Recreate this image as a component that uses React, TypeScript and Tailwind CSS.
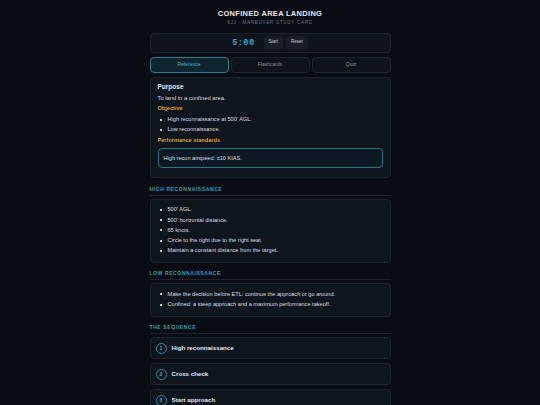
import { useState } from 'react';

const font = { fontFamily: '"Liberation Sans", Arial, sans-serif' };

function Bullets({ items }: { items: string[] }) {
  return (
    <ul className="flex flex-col gap-[3.3px]">
      {items.map((t) => (
        <li key={t} className="flex items-center gap-[4px] text-[5.6px] leading-[7px] text-[#d8dee5]">
          <span className="ml-[2px] h-[2px] w-[2px] shrink-0 bg-[#b9c2cc]" />
          <span className="ml-[2px]">{t}</span>
        </li>
      ))}
    </ul>
  );
}

function SectionTitle({ children }: { children: string }) {
  return (
    <div className="mt-[7.5px] mb-[3px] border-b border-[#1b2430] pb-[3px] text-[5px] leading-[6px] font-bold tracking-[0.12em] text-[#3a9fb5]">
      {children}
    </div>
  );
}

export default function App() {
  const [tab, setTab] = useState('Reference');
  const tabs = ['Reference', 'Flashcards', 'Quiz'];
  const steps = ['High reconnaissance', 'Cross check', 'Start approach'];

  return (
    <div className="min-h-[405px] w-full bg-[#090c13] leading-none" style={font}>
      <div className="mx-auto w-[241px] pt-[8.5px]">
        <h1 className="text-center text-[7.5px] leading-[9px] font-bold tracking-[0.04em] text-[#e6e9ee]">CONFINED AREA LANDING</h1>
        <p className="mt-[2.5px] text-center text-[4.6px] leading-[5px] tracking-[0.15em] text-[#6b7480]">6JJ · MANEUVER STUDY CARD</p>

        <div className="mt-[7.5px] flex h-[20px] items-center justify-center gap-[3px] rounded-[4px] border border-[#1a232e] bg-[#0f141c]">
          <span className="mr-[6px] font-mono text-[8.5px] leading-[10px] font-bold tracking-[0.06em] text-[#39a8c9]">5:00</span>
          <button className="h-[13px] rounded-[3px] bg-[#171e28] px-[5px] text-[4.5px] text-[#c7ced6]">Start</button>
          <button className="h-[13px] rounded-[3px] bg-[#171e28] px-[5px] text-[4.5px] text-[#c7ced6]">Reset</button>
        </div>

        <div className="mt-[4px] grid grid-cols-3 gap-[2px]">
          {tabs.map((t) => (
            <button
              key={t}
              onClick={() => setTab(t)}
              className={`h-[16px] rounded-[4px] border text-[5px] ${
                tab === t
                  ? 'border-[#2b7f91] bg-[#0f2630] text-[#4fb4cc]'
                  : 'border-[#1a232e] bg-[#0e131a] text-[#8a939e]'
              }`}
            >
              {t}
            </button>
          ))}
        </div>

        <div className="mt-[4px] rounded-[4px] border border-[#1a232e] bg-[#0f151d] px-[7px] pt-[5px] pb-[9px]">
          <div className="text-[6.5px] leading-[8px] font-bold text-[#e6e9ee]">Purpose</div>
          <div className="mt-[4.5px] text-[5.8px] leading-[7px] text-[#d8dee5]">To land in a confined area.</div>
          <div className="mt-[3px] mb-[4px] text-[5.6px] leading-[7px] font-bold text-[#d9a12a]">Objective</div>
          <Bullets items={["High reconnaissance at 500' AGL.", 'Low reconnaissance.']} />
          <div className="mt-[4px] text-[5.6px] leading-[7px] font-bold text-[#d9a12a]">Performance standards</div>
          <div className="mt-[4px] flex h-[20px] items-center rounded-[4px] border border-[#2b7485] bg-[#0b1a22] px-[5px] text-[5.6px] text-[#d8dee5]">
            High recon airspeed: ±10 KIAS.
          </div>
        </div>

        <SectionTitle>HIGH RECONNAISSANCE</SectionTitle>
        <div className="rounded-[4px] border border-[#1a232e] bg-[#0f151d] px-[7px] pt-[6.5px] pb-[7.5px]">
          <Bullets
            items={[
              "500' AGL.",
              "500' horizontal distance.",
              '65 knots.',
              'Circle to the right due to the right seat.',
              'Maintain a constant distance from the target.',
            ]}
          />
        </div>

        <SectionTitle>LOW RECONNAISSANCE</SectionTitle>
        <div className="rounded-[4px] border border-[#1a232e] bg-[#0f151d] px-[7px] pt-[6.5px] pb-[7.5px]">
          <Bullets
            items={[
              'Make the decision before ETL: continue the approach or go around.',
              'Confined: a steep approach and a maximum performance takeoff.',
            ]}
          />
        </div>

        <SectionTitle>THE SEQUENCE</SectionTitle>
        <div className="flex flex-col gap-[4px] pb-[8px]">
          {steps.map((s, i) => (
            <div key={s} className="flex h-[22px] items-center gap-[5px] rounded-[4px] border border-[#1a232e] bg-[#0f151d] px-[5px]">
              <span className="flex h-[11px] w-[11px] items-center justify-center rounded-full border border-[#2f8ea3] text-[5px] font-bold text-[#4fb4cc]">
                {i + 1}
              </span>
              <span className="text-[6.2px] font-bold text-[#e6e9ee]">{s}</span>
            </div>
          ))}
        </div>
      </div>
    </div>
  );
}
